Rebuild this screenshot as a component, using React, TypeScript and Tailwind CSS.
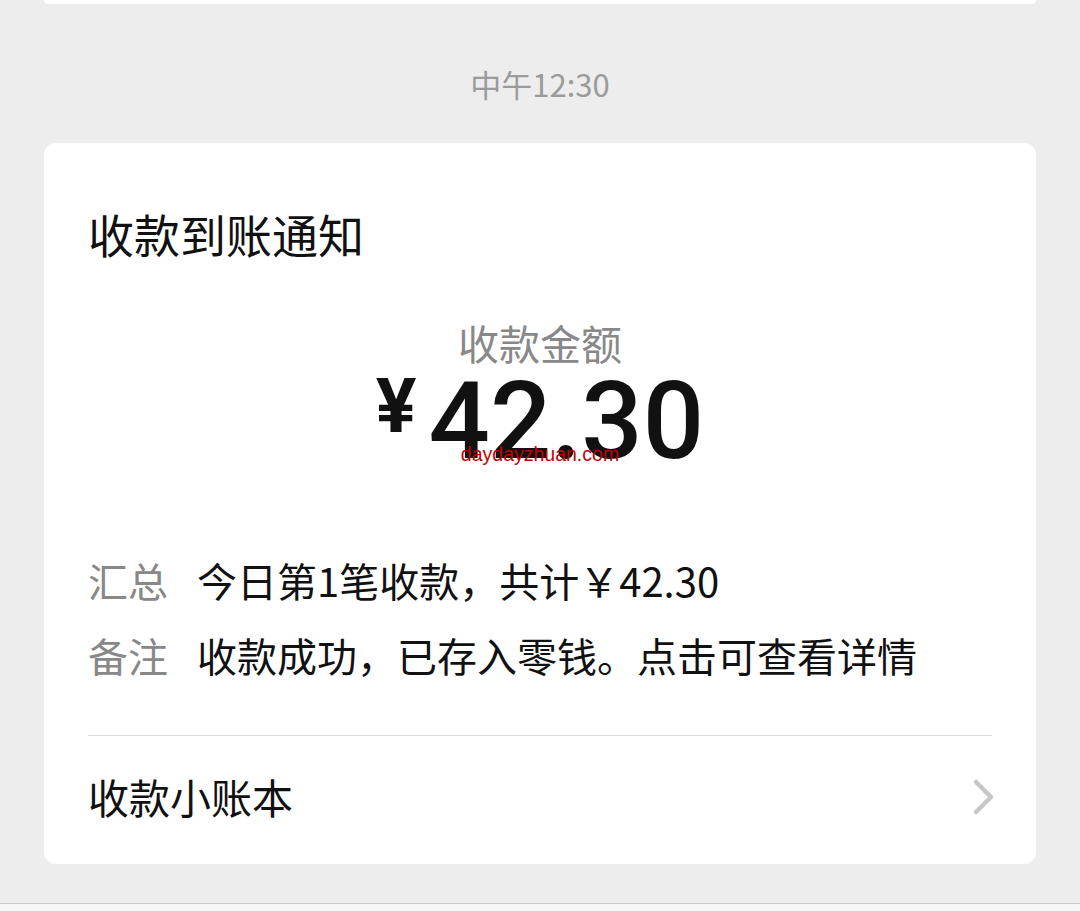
import React from "react";

const cjk = { fontFamily: '"Noto Sans CJK SC", "Noto Sans", sans-serif' };

function Chevron() {
  return (
    <svg width="28" height="38" viewBox="0 0 28 38" fill="none" className="-mr-[6px]">
      <path d="M6 4 L21 19 L6 34" stroke="#c7c7c7" strokeWidth="4.5" strokeLinecap="round" strokeLinejoin="round" />
    </svg>
  );
}

export default function App() {
  return (
    <div className="w-[1080px] h-[911px] bg-[#ededed] flex flex-col overflow-hidden" style={cjk}>
      <div className="mx-[44px] h-[4px] bg-white rounded-b-[8px]" />
      <div className="mt-[60px] h-[40px] leading-[40px] text-center text-[31px] text-[#9b9b9b]">中午12:30</div>
      <div className="mt-[39px] mx-[44px] h-[721px] bg-white rounded-[12px] px-[44px] flex flex-col">
        <div className="mt-[60px] h-[60px] leading-[60px] text-[46px] text-[#111]">收款到账通知</div>
        <div className="mt-[59px] h-[40px] leading-[40px] text-center text-[41px] text-[#888]">收款金额</div>
        <div className="relative mt-[10px] h-[80px] flex justify-center items-start">
          <span
            className="text-[76px] leading-[80px] font-bold text-[#111] mr-[12px] -mt-[6px]"
            style={{ fontFamily: 'Roboto, "Noto Sans", sans-serif' }}
          >
            ¥
          </span>
          <span
            className="text-[108px] leading-[80px] font-medium text-[#111] mt-[9px]"
            style={{ fontFamily: 'Roboto, "Noto Sans", sans-serif' }}
          >
            42.30
          </span>
          <div
            className="absolute left-0 right-0 top-[71px] text-center text-[19.5px] leading-[22px] text-[#c40000]"
            style={{ fontFamily: '"Liberation Sans", Arial, sans-serif' }}
          >
            daydayzhuan.com
          </div>
        </div>
        <div className="mt-[90px] flex h-[75px] items-center text-[40px]">
          <span className="w-[109px] text-[#888]">汇总</span>
          <span className="text-[#111]">今日第1笔收款，共计￥42.30</span>
        </div>
        <div className="flex h-[75px] items-center text-[40px]">
          <span className="w-[109px] text-[#888]">备注</span>
          <span className="text-[#111]">收款成功，已存入零钱。点击可查看详情</span>
        </div>
        <div className="mt-[43px] h-[1px] bg-[#dcdcdc]" />
        <div className="mt-[25px] h-[72px] flex items-center justify-between">
          <span className="text-[41px] text-[#111]">收款小账本</span>
          <Chevron />
        </div>
      </div>
      <div className="mt-[39px] h-[1px] bg-[#c9c9c9]" />
      <div className="flex-1 bg-[#f7f7f7]" />
    </div>
  );
}
